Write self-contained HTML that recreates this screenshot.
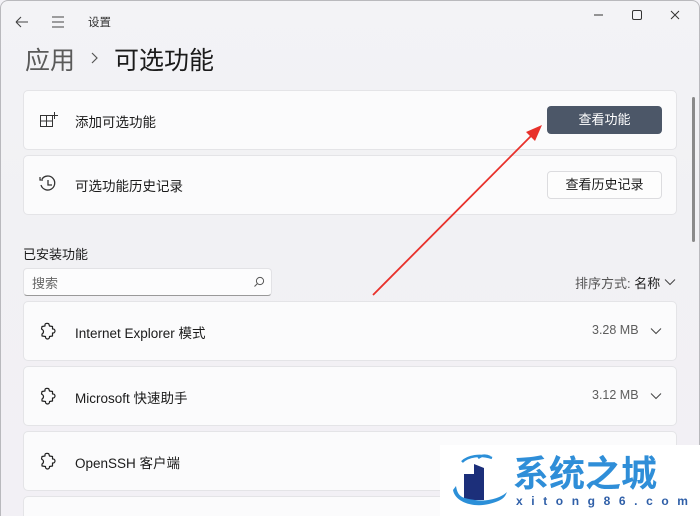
<!DOCTYPE html>
<html><head><meta charset="utf-8"><style>
*{margin:0;padding:0;box-sizing:border-box}
html,body{width:700px;height:516px;overflow:hidden}
body{background:#f2f1f6;font-family:"Liberation Sans","Noto Sans CJK SC",sans-serif;color:#1b1b1b;position:relative}
.win{position:absolute;left:0;top:0;width:700px;height:516px;border:1px solid #b9b9bd;border-bottom:none;border-radius:8px 8px 0 0;background:linear-gradient(180deg,#f3f3f6,#f1f1f4 40%,#f2f0f5)}
.abs{position:absolute}
.card{position:absolute;left:23px;width:654px;background:#fbfbfc;border:1px solid #e4e4e7;border-radius:5px}
.t14{font-size:13.5px}
.btn{position:absolute;left:547px;width:115px;height:28px;border-radius:4px;font-size:13px;text-align:center;line-height:28px}
.sz{position:absolute;left:592px;font-size:12.5px;color:#5d5d5d}
</style></head><body>
<div class="win"></div>
<svg class="abs" style="left:14px;top:14px" width="60" height="16"><path d="M2 8H14M2 8L7 3M2 8L7 13" stroke="#444" fill="none" stroke-width="1.1"/><path d="M38 3h12M38 8h12M38 13h12" stroke="#444" stroke-width="1.1"/></svg>
<div class="abs" style="left:88px;top:14px;font-size:11.5px;color:#333">设置</div>
<svg class="abs" style="left:590px;top:6px" width="100" height="20"><path d="M4 9H13" stroke="#333" stroke-width="1"/><rect x="42.5" y="4.5" width="9" height="9" rx="1.5" stroke="#333" fill="none"/><path d="M81 5l8 8M89 5l-8 8" stroke="#333" stroke-width="1"/></svg>
<div class="abs" style="left:25px;top:41px;font-size:25px;color:#5a5a5a">应用</div>
<svg class="abs" style="left:90px;top:51px" width="10" height="14"><path d="M2 2l5 5-5 5" stroke="#555" fill="none" stroke-width="1.2"/></svg>
<div class="abs" style="left:114px;top:41px;font-size:25px;color:#1b1b1b">可选功能</div>

<div class="card" style="top:90px;height:60px"></div>
<svg class="abs" style="left:39px;top:111px" width="20" height="18"><rect x="1.5" y="4.5" width="12" height="11" fill="none" stroke="#333"/><path d="M7.5 4.5v11M1.5 10h12M15.5 1v7M12 4.5h7" stroke="#333" fill="none"/></svg>
<div class="abs t14" style="left:75px;top:111px">添加可选功能</div>
<div class="btn" style="top:106px;background:#4c5768;color:#fff">查看功能</div>

<div class="card" style="top:155px;height:60px"></div>
<svg class="abs" style="left:38px;top:174px" width="20" height="20"><path d="M4 5A7 7 0 1 1 3 11" stroke="#333" fill="none" stroke-width="1.3"/><path d="M2 3v3h3" stroke="#333" fill="none" stroke-width="1.2"/><path d="M10 6v5h4" stroke="#333" fill="none" stroke-width="1.3"/></svg>
<div class="abs t14" style="left:75px;top:175px">可选功能历史记录</div>
<div class="btn" style="top:171px;background:#fdfdfd;border:1px solid #dcdcdf;color:#1b1b1b;line-height:26px">查看历史记录</div>

<div class="abs" style="left:23px;top:244px;font-size:13px">已安装功能</div>
<div class="abs" style="left:23px;top:268px;width:249px;height:28px;background:#fcfcfd;border:1px solid #e2e2e5;border-bottom:1px solid #999;border-radius:4px"></div>
<div class="abs" style="left:32px;top:273px;font-size:13px;color:#666">搜索</div>
<svg class="abs" style="left:253px;top:276px" width="12" height="12"><circle cx="7" cy="5" r="3.6" stroke="#555" fill="none"/><path d="M4.5 7.5L1.5 10.5" stroke="#555"/></svg>
<div class="abs" style="left:575px;top:273px;font-size:13px;color:#555">排序方式: <span style="color:#1b1b1b">名称</span></div>
<svg class="abs" style="left:664px;top:278px" width="12" height="8"><path d="M1 1.5l5 5 5-5" stroke="#444" fill="none"/></svg>

<div class="card" style="top:301px;height:60px"></div>
<div class="card" style="top:366px;height:60px"></div>
<div class="card" style="top:431px;height:60px"></div>
<div class="card" style="top:496px;height:30px"></div>
<svg class="abs" style="left:38px;top:321px" width="20" height="20"><path d="M7 3.5c0-1.5 4-1.5 4 0l0.5 1.5 3 0.5 0 2.5c1.5-0.3 2.5 0.8 2.5 2s-1 2.3-2.5 2l0 3-3 0.5c0.3 1.5-0.8 2.5-2 2.5s-2.3-1-2-2.5l-3.5-0.5 0-2c1-0.5 1.5-1.3 1.5-2.5s-1-2-2-2.5l0.5-2.5 3-0.5z" stroke="#222" fill="none" stroke-width="1.2" stroke-linejoin="round"/></svg>
<svg class="abs" style="left:38px;top:386px" width="20" height="20"><path d="M7 3.5c0-1.5 4-1.5 4 0l0.5 1.5 3 0.5 0 2.5c1.5-0.3 2.5 0.8 2.5 2s-1 2.3-2.5 2l0 3-3 0.5c0.3 1.5-0.8 2.5-2 2.5s-2.300-1-2-2.5l-3.5-0.5 0-2c1-0.5 1.5-1.3 1.5-2.5s-1-2-2-2.5l0.5-2.5 3-0.5z" stroke="#222" fill="none" stroke-width="1.2" stroke-linejoin="round"/></svg>
<svg class="abs" style="left:38px;top:451px" width="20" height="20"><path d="M7 3.5c0-1.5 4-1.5 4 0l0.5 1.5 3 0.5 0 2.5c1.5-0.3 2.5 0.8 2.5 2s-1 2.3-2.5 2l0 3-3 0.5c0.3 1.5-0.8 2.5-2 2.5s-2.3-1-2-2.5l-3.5-0.5 0-2c1-0.5 1.5-1.3 1.5-2.5s-1-2-2-2.5l0.5-2.5 3-0.5z" stroke="#222" fill="none" stroke-width="1.2" stroke-linejoin="round"/></svg>
<div class="abs t14" style="left:75px;top:322px">Internet Explorer 模式</div>
<div class="abs t14" style="left:75px;top:387px">Microsoft 快速助手</div>
<div class="abs t14" style="left:75px;top:452px">OpenSSH 客户端</div>
<div class="sz" style="top:323px">3.28 MB</div>
<div class="sz" style="top:388px">3.12 MB</div>
<svg class="abs" style="left:650px;top:327px" width="12" height="8"><path d="M1 1.5l5 5 5-5" stroke="#444" fill="none"/></svg>
<svg class="abs" style="left:650px;top:392px" width="12" height="8"><path d="M1 1.5l5 5 5-5" stroke="#444" fill="none"/></svg>

<div class="abs" style="left:692px;top:97px;width:3px;height:145px;background:#8a8a8a;border-radius:2px"></div>

<svg class="abs" style="left:0;top:0" width="700" height="516"><path d="M373 295L532 135" stroke="#e8312b" stroke-width="1.8"/><path d="M542 125L526 132L535 141Z" fill="#e8312b"/></svg>

<div class="abs" style="left:440px;top:445px;width:260px;height:71px;background:#fff"></div>
<svg class="abs" style="left:450px;top:450px" width="60" height="62"><path d="M12 12c6-6 18-8 30-4M28 8c4-3 8-3 12-1" stroke="#2b8fd8" stroke-width="2.5" fill="none"/><path d="M14 24h10v26H14z" fill="#1c2f7a"/><path d="M24 14l10 4v32H24z" fill="#1c2f7a"/><path d="M3 40c2 12 20 18 36 14s16-8 18-12c-6 6-20 10-32 8S8 48 6 36z" fill="#2b8fd8"/></svg>
<div class="abs" style="left:513px;top:445px;font-size:36px;font-weight:bold;color:#2f8ed8;letter-spacing:0px">系统之城</div>
<div class="abs" style="left:516px;top:494px;font-size:12px;color:#2f5fa8;letter-spacing:8.6px;font-weight:bold">xitong86.com</div>
</body></html>
